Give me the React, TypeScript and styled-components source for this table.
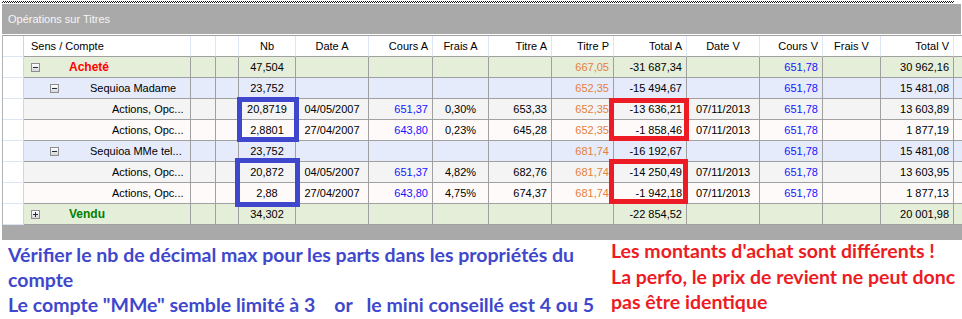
import React from 'react';
import styled, { createGlobalStyle, css } from 'styled-components';

const GlobalStyle = createGlobalStyle`
  html, body { margin: 0; padding: 0; background: #ffffff; }
  body { font-family: "Liberation Sans", Arial, sans-serif; }
`;

type Align = 'left' | 'center' | 'right';
type Tone = 'plain' | 'blue' | 'orange';
type RowKind = 'group' | 'account' | 'odd' | 'even';

interface Col {
  w: number;
  head: string;
  align: Align;
  tone: Tone;
}

const COLS: Col[] = [
  { w: 21, head: '', align: 'left', tone: 'plain' },
  { w: 167, head: 'Sens / Compte', align: 'left', tone: 'plain' },
  { w: 25, head: '', align: 'left', tone: 'plain' },
  { w: 23, head: '', align: 'left', tone: 'plain' },
  { w: 57, head: 'Nb', align: 'center', tone: 'plain' },
  { w: 73, head: 'Date A', align: 'center', tone: 'plain' },
  { w: 64, head: 'Cours A', align: 'right', tone: 'blue' },
  { w: 56, head: 'Frais A', align: 'center', tone: 'plain' },
  { w: 63, head: 'Titre A', align: 'right', tone: 'plain' },
  { w: 62, head: 'Titre P', align: 'right', tone: 'orange' },
  { w: 73, head: 'Total A', align: 'right', tone: 'plain' },
  { w: 73, head: 'Date V', align: 'center', tone: 'plain' },
  { w: 63, head: 'Cours V', align: 'right', tone: 'blue' },
  { w: 58, head: 'Frais V', align: 'center', tone: 'plain' },
  { w: 73, head: 'Total V', align: 'right', tone: 'plain' },
  { w: 7, head: '', align: 'left', tone: 'plain' },
];

interface RowData {
  kind: RowKind;
  level: 0 | 1 | 2;
  label: string;
  labelColor?: string;
  expander?: 'open' | 'closed';
  values: string[]; // columns 4..14
}

const ROWS: RowData[] = [
  {
    kind: 'group', level: 0, label: 'Acheté', labelColor: '#ff0000', expander: 'open',
    values: ['47,504', '', '', '', '', '667,05', '-31 687,34', '', '651,78', '', '30 962,16'],
  },
  {
    kind: 'account', level: 1, label: 'Sequioa Madame', expander: 'open',
    values: ['23,752', '', '', '', '', '652,35', '-15 494,67', '', '651,78', '', '15 481,08'],
  },
  {
    kind: 'odd', level: 2, label: 'Actions, Opc...',
    values: ['20,8719', '04/05/2007', '651,37', '0,30%', '653,33', '652,35', '-13 636,21', '07/11/2013', '651,78', '', '13 603,89'],
  },
  {
    kind: 'even', level: 2, label: 'Actions, Opc...',
    values: ['2,8801', '27/04/2007', '643,80', '0,23%', '645,28', '652,35', '-1 858,46', '07/11/2013', '651,78', '', '1 877,19'],
  },
  {
    kind: 'account', level: 1, label: 'Sequioa MMe tel...', expander: 'open',
    values: ['23,752', '', '', '', '', '681,74', '-16 192,67', '', '651,78', '', '15 481,08'],
  },
  {
    kind: 'odd', level: 2, label: 'Actions, Opc...',
    values: ['20,872', '04/05/2007', '651,37', '4,82%', '682,76', '681,74', '-14 250,49', '07/11/2013', '651,78', '', '13 603,95'],
  },
  {
    kind: 'even', level: 2, label: 'Actions, Opc...',
    values: ['2,88', '27/04/2007', '643,80', '4,75%', '674,37', '681,74', '-1 942,18', '07/11/2013', '651,78', '', '1 877,13'],
  },
  {
    kind: 'group', level: 0, label: 'Vendu', labelColor: '#008000', expander: 'closed',
    values: ['34,302', '', '', '', '', '', '-22 854,52', '', '', '', '20 001,98'],
  },
];

const ROW_BG: Record<RowKind, string> = {
  group: '#e5eed8',
  account: '#e6ebfb',
  odd: '#f4f4f4',
  even: '#fffafa',
};

const TONE_COLOR: Record<Tone, string> = {
  plain: '#000000',
  blue: '#1414ff',
  orange: '#e4803c',
};

const Page = styled.div`
  width: 962px;
  padding-top: 1px;
`;

const DottedRule = styled.div`
  margin-left: 2px;
  width: 952px;
  height: 2px;
  margin-bottom: 1px;
  background: repeating-conic-gradient(#111 0 25%, #ffffff 0 50%) 0 0 / 2px 2px;
`;

const TitleBar = styled.div`
  margin-left: 2px;
  width: 959px;
  height: 30px;
  margin-bottom: 1px;
  background: #a9a9a9;
  color: #f6f6f6;
  font-size: 11px;
  display: flex;
  align-items: center;
  padding-left: 6px;
  box-sizing: border-box;
`;

const GridFrame = styled.div`
  position: relative;
  margin-left: 2px;
  width: 960px;
  box-sizing: border-box;
  border-top: 1px solid #a0a0a0;
  border-left: 1px solid #b4b4b4;
  border-right: 1px solid #b0b0b0;
  display: grid;
  grid-template-columns: ${COLS.map((c) => `${c.w}px`).join(' ')};
  grid-auto-rows: 21px;
  font-size: 11px;
`;

const cellBase = css`
  box-sizing: border-box;
  white-space: nowrap;
  overflow: hidden;
  display: flex;
  align-items: center;
  padding: 0 4px;
`;

const justify = (a: Align) => (a === 'left' ? 'flex-start' : a === 'center' ? 'center' : 'flex-end');

const HeaderCell = styled.div<{ $align: Align; $last?: boolean }>`
  ${cellBase};
  background: #ffffff;
  color: #000;
  justify-content: ${(p) => justify(p.$align)};
  border-bottom: 1px solid #a0a0a0;
  border-right: ${(p) => (p.$last ? 'none' : '1px solid #dde6f4')};
  padding-left: ${(p) => (p.$align === 'left' ? '7px' : '4px')};
`;

const IndicatorCell = styled.div`
  box-sizing: border-box;
  background: #ffffff;
  border-right: 1px solid #c9d6ec;
  border-bottom: 1px solid #dce5f3;
`;

const DataCell = styled.div<{ $align: Align; $bg: string; $tone: Tone; $last?: boolean }>`
  ${cellBase};
  background: ${(p) => p.$bg};
  color: ${(p) => TONE_COLOR[p.$tone]};
  justify-content: ${(p) => justify(p.$align)};
  border-bottom: 1px solid #a0a0a0;
  border-right: ${(p) => (p.$last ? 'none' : '1px solid #a0a0a0')};
`;

const TreeCell = styled.div<{ $bg: string; $level: number }>`
  ${cellBase};
  background: ${(p) => p.$bg};
  border-bottom: 1px solid #a0a0a0;
  border-right: 1px solid #a0a0a0;
  padding-left: ${(p) => (p.$level === 0 ? 7 : p.$level === 1 ? 26 : 88)}px;
`;

const Expander = styled.span<{ $open: boolean }>`
  position: relative;
  flex: none;
  width: 9px;
  height: 9px;
  box-sizing: border-box;
  border: 1px solid #8e8e8e;
  background: linear-gradient(#ffffff, #d6d6d6);
  &::before {
    content: '';
    position: absolute;
    left: 1px;
    top: 3px;
    width: 5px;
    height: 1px;
    background: #1f2a44;
  }
  &::after {
    content: '';
    display: ${(p) => (p.$open ? 'none' : 'block')};
    position: absolute;
    left: 3px;
    top: 1px;
    width: 1px;
    height: 5px;
    background: #1f2a44;
  }
`;

const TreeLabel = styled.span<{ $color?: string; $bold?: boolean; $gap: number }>`
  margin-left: ${(p) => p.$gap}px;
  color: ${(p) => p.$color ?? '#000'};
  font-weight: ${(p) => (p.$bold ? 700 : 400)};
  font-size: ${(p) => (p.$bold ? '12px' : '11px')};
  overflow: hidden;
  text-overflow: clip;
`;

const Highlight = styled.div<{ $color: string; $x: number; $y: number; $w: number; $h: number }>`
  position: absolute;
  left: ${(p) => p.$x}px;
  top: ${(p) => p.$y}px;
  width: ${(p) => p.$w}px;
  height: ${(p) => p.$h}px;
  box-sizing: border-box;
  border: 5px solid ${(p) => p.$color};
  pointer-events: none;
`;

const FooterBar = styled.div`
  margin-left: 2px;
  width: 960px;
  height: 15px;
  background: #a9a9a9;
`;

const Notes = styled.div`
  display: flex;
  align-items: flex-start;
  font-family: Lato, "Liberation Sans", sans-serif;
  font-weight: 700;
  font-size: 19.5px;
`;

const NoteBlock = styled.div<{ $color: string; $width: number; $shift: number; $line: number }>`
  box-sizing: border-box;
  width: ${(p) => p.$width}px;
  color: ${(p) => p.$color};
  line-height: ${(p) => p.$line}px;
  white-space: pre;
  margin-top: ${(p) => p.$shift}px;
`;

const BlueNote = styled(NoteBlock)`
  padding-left: 8px;
`;

const RedNote = styled(NoteBlock)``;

function Row({ row }: { row: RowData }) {
  const bg = ROW_BG[row.kind];
  const gap = row.level === 0 ? 29 : 31;
  return (
    <>
      <IndicatorCell />
      <TreeCell $bg={bg} $level={row.level}>
        {row.expander && <Expander $open={row.expander === 'open'} />}
        <TreeLabel $color={row.labelColor} $bold={row.level === 0} $gap={row.expander ? gap : 0}>
          {row.label}
        </TreeLabel>
      </TreeCell>
      <DataCell $align="left" $bg={bg} $tone="plain" />
      <DataCell $align="left" $bg={bg} $tone="plain" />
      {row.values.map((v, i) => {
        const col = COLS[i + 4];
        return (
          <DataCell key={i} $align={col.align} $bg={bg} $tone={col.tone}>
            {v}
          </DataCell>
        );
      })}
      <DataCell $align="left" $bg={bg} $tone="plain" $last />
    </>
  );
}

export default function App() {
  return (
    <Page>
      <GlobalStyle />
      <DottedRule />
      <TitleBar>Opérations sur Titres</TitleBar>
      <GridFrame>
        {COLS.map((c, i) =>
          i === 0 ? (
            <IndicatorCell key={i} />
          ) : (
            <HeaderCell key={i} $align={c.align} $last={i === COLS.length - 1}>
              {c.head}
            </HeaderCell>
          ),
        )}
        {ROWS.map((r, i) => (
          <Row key={i} row={r} />
        ))}
        <Highlight $color="#3f48cc" $x={234} $y={61} $w={62} $h={45} />
        <Highlight $color="#3f48cc" $x={232} $y={122} $w={65} $h={49} />
        <Highlight $color="#ed1c24" $x={606} $y={62} $w={80} $h={43} />
        <Highlight $color="#ed1c24" $x={606} $y={123} $w={79} $h={45} />
      </GridFrame>
      <FooterBar />
      <Notes>
        <BlueNote $color="#3f48cc" $width={611} $shift={2} $line={25}>
          {'Vérifier le nb de décimal max pour les parts dans les propriétés du\ncompte\nLe compte "MMe" semble limité à 3    or   le mini conseillé est 4 ou 5'}
        </BlueNote>
        <RedNote $color="#ed1c24" $width={351} $shift={-2} $line={25.5}>
          {"Les montants d'achat sont différents !\nLa perfo, le prix de revient ne peut donc\npas être identique"}
        </RedNote>
      </Notes>
    </Page>
  );
}
